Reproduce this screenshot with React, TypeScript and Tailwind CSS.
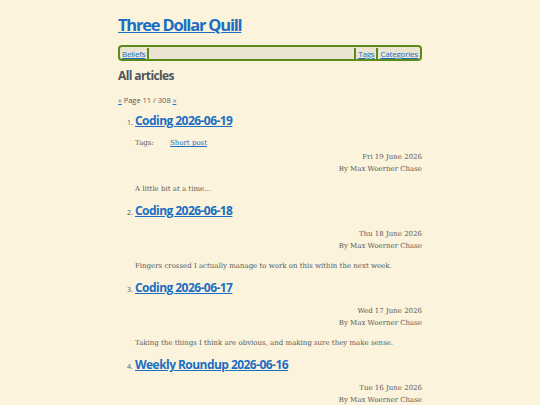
const articles = [
  { n: 1, title: 'Coding 2026-06-19', tags: ['Short post'], date: 'Fri 19 June 2026', summary: 'A little bit at a time...' },
  { n: 2, title: 'Coding 2026-06-18', date: 'Thu 18 June 2026', summary: 'Fingers crossed I actually manage to work on this within the next week.' },
  { n: 3, title: 'Coding 2026-06-17', date: 'Wed 17 June 2026', summary: 'Taking the things I think are obvious, and making sure they make sense.' },
  { n: 4, title: 'Weekly Roundup 2026-06-16', date: 'Tue 16 June 2026', summary: '' },
];

const heading = { fontFamily: '"Open Sans", "Noto Sans", sans-serif' };
const body = { fontFamily: '"DejaVu Serif", "Liberation Serif", serif' };

export default function App() {
  return (
    <div className="h-[405px] w-[540px] overflow-hidden bg-[#fcf3dc] text-[#595959]" style={body}>
      <div className="mx-auto w-[304px] pt-[14px]">
        <h1 className="text-[16.5px] font-bold leading-[22px] tracking-[-1.2px]" style={heading}>
          <a href="#" className="text-[#1a6ec4] underline">Three Dollar Quill</a>
        </h1>

        {/* nav */}
        <nav className="mt-[9px] flex h-[16px] items-center rounded-[4px] border-2 border-[#5b8c1a] bg-[#ebe4d3] text-[8px] tracking-[-0.2px]" style={heading}>
          <a href="#" className="border-r-2 border-[#5b8c1a] px-[2px] leading-[11px] text-[#1a6ec4] underline">Beliefs</a>
          <div className="flex-1" />
          <a href="#" className="border-l-2 border-[#5b8c1a] px-[2px] leading-[11px] text-[#1a6ec4] underline">Tags</a>
          <a href="#" className="border-l-2 border-[#5b8c1a] px-[2px] leading-[11px] text-[#1a6ec4] underline">Categories</a>
        </nav>

        <h2 className="mt-[6px] text-[12px] font-bold leading-[18px] tracking-[-0.6px] text-[#4f5559]" style={heading}>All articles</h2>

        <p className="mt-[10px] text-[7.5px] leading-[10px]" style={heading}>
          <a href="#" className="text-[#1a6ec4] underline">«</a> Page 11 / 308 <a href="#" className="text-[#1a6ec4] underline">»</a>
        </p>

        <ol className="mt-[7px] pl-[17px]">
          {articles.map(a => (
            <li key={a.n} className="mb-[7px]">
              <div className="flex items-baseline">
                <span className="-ml-[8px] w-[8px] text-[7px]" style={heading}>{a.n}.</span>
                <a href="#" className="text-[12px] font-bold leading-[18px] tracking-[-0.55px] text-[#1a6ec4] underline" style={heading}>{a.title}</a>
              </div>
              {a.tags && (
                <div className="mt-[7px] flex text-[7px] leading-[12px]">
                  <span className="w-[35px]">Tags:</span>
                  {a.tags.map(t => <a key={t} href="#" className="text-[#1a6ec4] underline">{t}</a>)}
                </div>
              )}
              <div className={`${a.tags ? 'mt-[2px]' : 'mt-[8px]'} text-right text-[7px] leading-[12px]`}>
                <div>{a.date}</div>
                <div>By Max Woerner Chase</div>
              </div>
              {a.summary && <p className="mt-[8px] text-[7px] leading-[12px]">{a.summary}</p>}
            </li>
          ))}
        </ol>
      </div>
    </div>
  );
}
